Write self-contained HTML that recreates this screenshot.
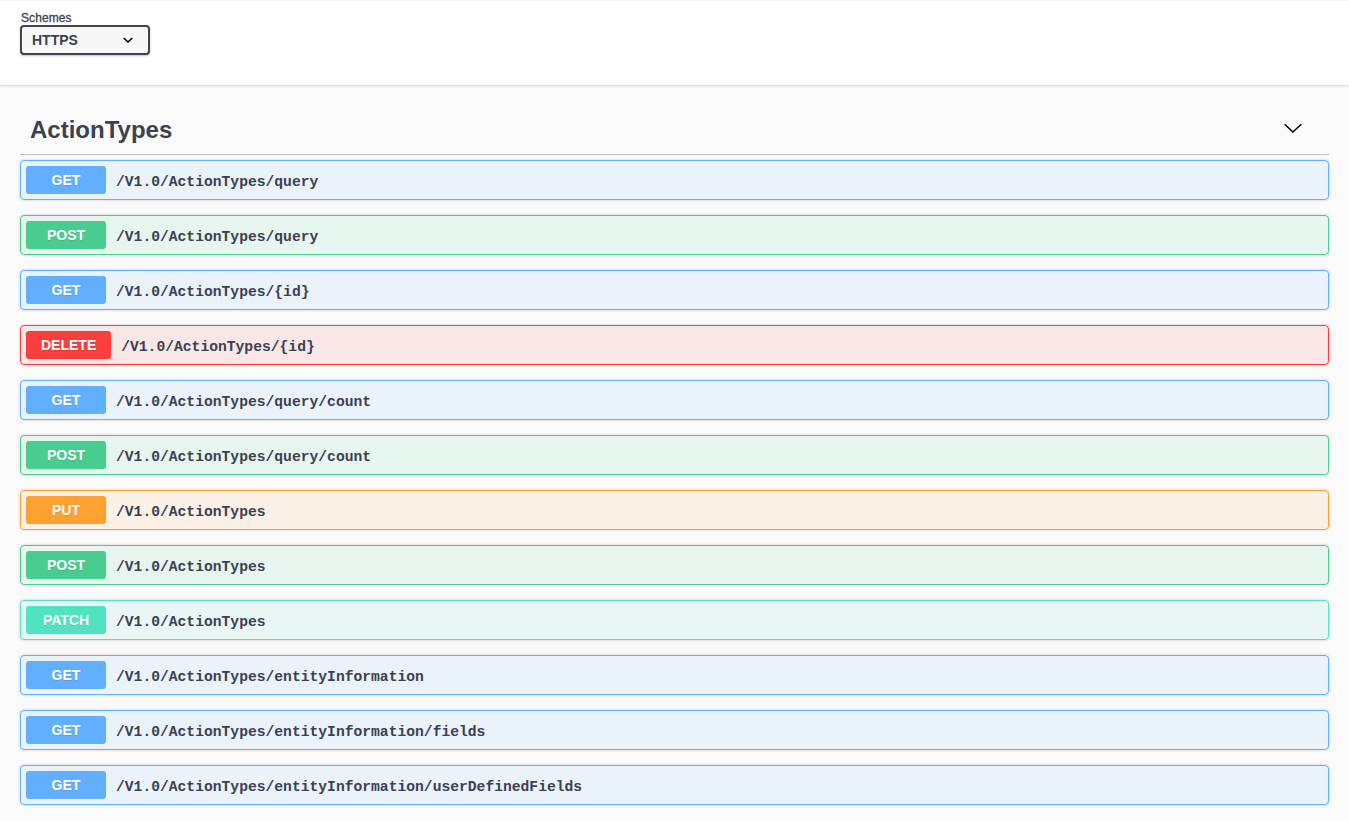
<!DOCTYPE html>
<html>
<head>
<meta charset="utf-8">
<style>
html,body{margin:0;padding:0;}
body{background:#fafafa;width:1349px;height:821px;overflow:hidden;font-family:"Liberation Sans",sans-serif;color:#3b4151;}
.top{height:1px;background:#f6f6f6;}
.scheme{background:#fff;box-shadow:0 1px 2px 0 rgba(0,0,0,.15);padding:30px 0;margin:0 0 20px;position:relative;}
.wrap{padding:0 20px;}
.schemes{display:flex;flex-direction:column;}
.lbl{font-size:12px;font-weight:400;letter-spacing:0.1px;-webkit-text-stroke:0.3px #3b4151;padding-left:1px;margin:-20px 15px 0 0;line-height:14px;}
.sel{position:relative;box-sizing:border-box;width:130px;height:30px;border:2px solid #41444e;border-radius:4px;background:#f7f7f7;box-shadow:0 1px 2px 0 rgba(0,0,0,.25);font-size:14px;font-weight:700;}
.sel span{position:absolute;left:10px;top:5px;line-height:16px;}
.sel svg{position:absolute;right:15px;top:8px;}
.tag{position:relative;display:flex;align-items:center;font-size:24px;margin:0 0 5px;padding:10px 20px 10px 10px;border-bottom:1px solid rgba(59,65,81,.3);height:29px;}
.tag .t{flex:1;font-weight:700;}
.tag svg{position:absolute;left:1263px;top:18px;overflow:visible;}
.op{box-sizing:border-box;height:40px;margin:0 0 15px;border:1px solid;border-radius:4px;box-shadow:0 0 3px rgba(0,0,0,.19);display:flex;align-items:center;padding:0 5px;}
.m{box-sizing:border-box;min-width:80px;height:28px;padding:0 15px;border-radius:3px;color:#fff;font-size:14px;font-weight:700;text-align:center;line-height:28px;text-shadow:0 1px 0 rgba(0,0,0,.1);}
.p{font-family:"Liberation Mono",monospace;font-weight:700;font-size:14.66px;padding:0 10px;color:#3b4151;position:relative;top:2px;}
.get{border-color:#61affe;background:rgba(97,175,254,.1);} .get .m{background:#61affe;}
.post{border-color:#49cc90;background:rgba(73,204,144,.1);} .post .m{background:#49cc90;}
.del{border-color:#f93e3e;background:rgba(249,62,62,.1);} .del .m{background:#f93e3e;}
.put{border-color:#fca130;background:rgba(252,161,48,.1);} .put .m{background:#fca130;}
.patch{border-color:#50e3c2;background:rgba(80,227,194,.1);} .patch .m{background:#50e3c2;}
</style>
</head>
<body>
<div class="top"></div>
<div class="scheme"><div class="wrap"><div class="schemes">
<div class="lbl">Schemes</div>
<div class="sel"><span>HTTPS</span><svg width="12" height="8" viewBox="0 0 12 8"><path d="M2.7 3.0 L7 7.0 L11.3 3.0" fill="none" stroke="#000" stroke-width="1.6"/></svg></div>
</div></div></div>
<div class="wrap">
<div class="tag"><span class="t">ActionTypes</span><svg width="20" height="12" viewBox="0 0 20 12"><path d="M1.7 1.3 L9.9 9 L18.3 1.3" fill="none" stroke="#000" stroke-width="1.5"/></svg></div>
<div class="op get"><span class="m">GET</span><span class="p">/V1.0/ActionTypes/query</span></div>
<div class="op post"><span class="m">POST</span><span class="p">/V1.0/ActionTypes/query</span></div>
<div class="op get"><span class="m">GET</span><span class="p">/V1.0/ActionTypes/{id}</span></div>
<div class="op del"><span class="m">DELETE</span><span class="p">/V1.0/ActionTypes/{id}</span></div>
<div class="op get"><span class="m">GET</span><span class="p">/V1.0/ActionTypes/query/count</span></div>
<div class="op post"><span class="m">POST</span><span class="p">/V1.0/ActionTypes/query/count</span></div>
<div class="op put"><span class="m">PUT</span><span class="p">/V1.0/ActionTypes</span></div>
<div class="op post"><span class="m">POST</span><span class="p">/V1.0/ActionTypes</span></div>
<div class="op patch"><span class="m">PATCH</span><span class="p">/V1.0/ActionTypes</span></div>
<div class="op get"><span class="m">GET</span><span class="p">/V1.0/ActionTypes/entityInformation</span></div>
<div class="op get"><span class="m">GET</span><span class="p">/V1.0/ActionTypes/entityInformation/fields</span></div>
<div class="op get"><span class="m">GET</span><span class="p">/V1.0/ActionTypes/entityInformation/userDefinedFields</span></div>
</div>
</body>
</html>
